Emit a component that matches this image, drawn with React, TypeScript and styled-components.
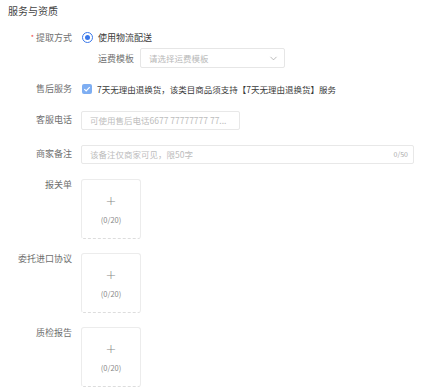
import styled, { createGlobalStyle } from "styled-components";
import { ChevronDown } from "lucide-react";

interface RowProps {
  mt?: number;
  top?: boolean;
}

const GlobalStyle = createGlobalStyle`
  body {
    margin: 0;
    background: #ffffff;
    font-family: "Noto Sans CJK SC", "Noto Sans", sans-serif;
  }
`;

const uploads = [
  { label: "报关单", mt: 15 },
  { label: "委托进口协议", mt: 14 },
  { label: "质检报告", mt: 14 },
];

export default function App() {
  return (
    <Page>
      <GlobalStyle />
      <Title>服务与资质</Title>

      <Row>
        <Label>
          <Star>*</Star>提取方式
        </Label>
        <Radio />
        <Text>使用物流配送</Text>
      </Row>
      <SubRow>
        <SubLabel>运费模板</SubLabel>
        <Select>
          <span>请选择运费模板</span>
          <ChevronDown size={11} strokeWidth={1.5} color="#9a9a9a" />
        </Select>
      </SubRow>

      <Row mt={11}>
        <Label>售后服务</Label>
        <Checkbox>
          <svg width="8" height="8" viewBox="0 0 8 8">
            <path d="M1.3 4.1 L3.2 5.9 L6.7 2.2" fill="none" stroke="#fff" strokeWidth="1.2" />
          </svg>
        </Checkbox>
        <Text small>7天无理由退换货，该类目商品须支持【7天无理由退换货】服务</Text>
      </Row>

      <Row mt={11}>
        <Label>客服电话</Label>
        <Input width={159}>
          <Placeholder>可使用售后电话6677 77777777 77...</Placeholder>
        </Input>
      </Row>

      <Row mt={14}>
        <Label>商家备注</Label>
        <Input width={333}>
          <Placeholder>该备注仅商家可见，限50字</Placeholder>
          <Count>0/50</Count>
        </Input>
      </Row>

      {uploads.map((u) => (
        <Row key={u.label} mt={u.mt} top>
          <Label top>{u.label}</Label>
          <Upload>
            <Plus>+</Plus>
            <UploadCount>(0/20)</UploadCount>
          </Upload>
        </Row>
      ))}
    </Page>
  );
}

const Page = styled.div`
  width: 435px;
  height: 387px;
  overflow: hidden;
  padding: 0 8px;
  box-sizing: border-box;
`;

const Title = styled.div`
  height: 27px;
  line-height: 21px;
  font-size: 10px;
  color: #444444;
`;

const Row = styled.div<RowProps>`
  display: flex;
  align-items: ${(p) => (p.top ? "flex-start" : "center")};
  min-height: 20px;
  margin-top: ${(p) => (p.mt ? p.mt : 0)}px;
`;

const Label = styled.div<{ top?: boolean }>`
  width: 64px;
  flex-shrink: 0;
  margin-right: 9px;
  text-align: right;
  font-size: 9px;
  line-height: ${(p) => (p.top ? "11px" : "20px")};
  color: #707070;
  white-space: nowrap;
`;

const Star = styled.span`
  color: #f0433a;
  font-size: 7px;
  margin-right: 2px;
  vertical-align: 1px;
`;

const Radio = styled.span`
  width: 9px;
  height: 9px;
  border: 1px solid #3a78ea;
  border-radius: 50%;
  margin: 0 5px 0 1px;
  display: flex;
  align-items: center;
  justify-content: center;
  &::after {
    content: "";
    width: 5px;
    height: 5px;
    border-radius: 50%;
    background: #3a78ea;
  }
`;

const Text = styled.span<{ small?: boolean }>`
  font-size: ${(p) => (p.small ? "8.5px" : "9px")};
  color: #3a3a3a;
  white-space: nowrap;
`;

const SubRow = styled.div`
  display: flex;
  align-items: center;
  height: 20px;
  padding-left: 90px;
`;

const SubLabel = styled.span`
  font-size: 9px;
  color: #707070;
  width: 42px;
`;

const Select = styled.div`
  width: 145px;
  height: 20px;
  box-sizing: border-box;
  border: 1px solid #e6e6e6;
  border-radius: 2px;
  display: flex;
  align-items: center;
  justify-content: space-between;
  padding: 0 5px 0 8px;
  font-size: 8.5px;
  color: #b8b8b8;
`;

const Checkbox = styled.span`
  width: 10px;
  height: 10px;
  border-radius: 2px;
  background: #7eaef2;
  display: flex;
  align-items: center;
  justify-content: center;
  margin: 0 5px 0 1px;
`;

const Input = styled.div<{ width: number }>`
  width: ${(p) => p.width}px;
  height: 19px;
  box-sizing: border-box;
  border: 1px solid #e8e8e8;
  border-radius: 2px;
  display: flex;
  align-items: center;
  justify-content: space-between;
  padding: 0 5px 0 8px;
`;

const Placeholder = styled.span`
  font-size: 8.5px;
  color: #bdbdbd;
  white-space: nowrap;
`;

const Count = styled.span`
  font-size: 7px;
  color: #aaaaaa;
`;

const Upload = styled.div`
  width: 60px;
  height: 60px;
  box-sizing: border-box;
  border: 1px solid #ececec;
  border-bottom: 1px dashed #dddddd;
  border-radius: 3px;
  display: flex;
  flex-direction: column;
  align-items: center;
  justify-content: center;
`;

const Plus = styled.span`
  font-size: 13px;
  font-weight: 300;
  line-height: 13px;
  color: #888888;
  font-family: "DejaVu Sans", sans-serif;
`;

const UploadCount = styled.span`
  margin-top: 7px;
  font-size: 7.5px;
  color: #8a8a8a;
`;
